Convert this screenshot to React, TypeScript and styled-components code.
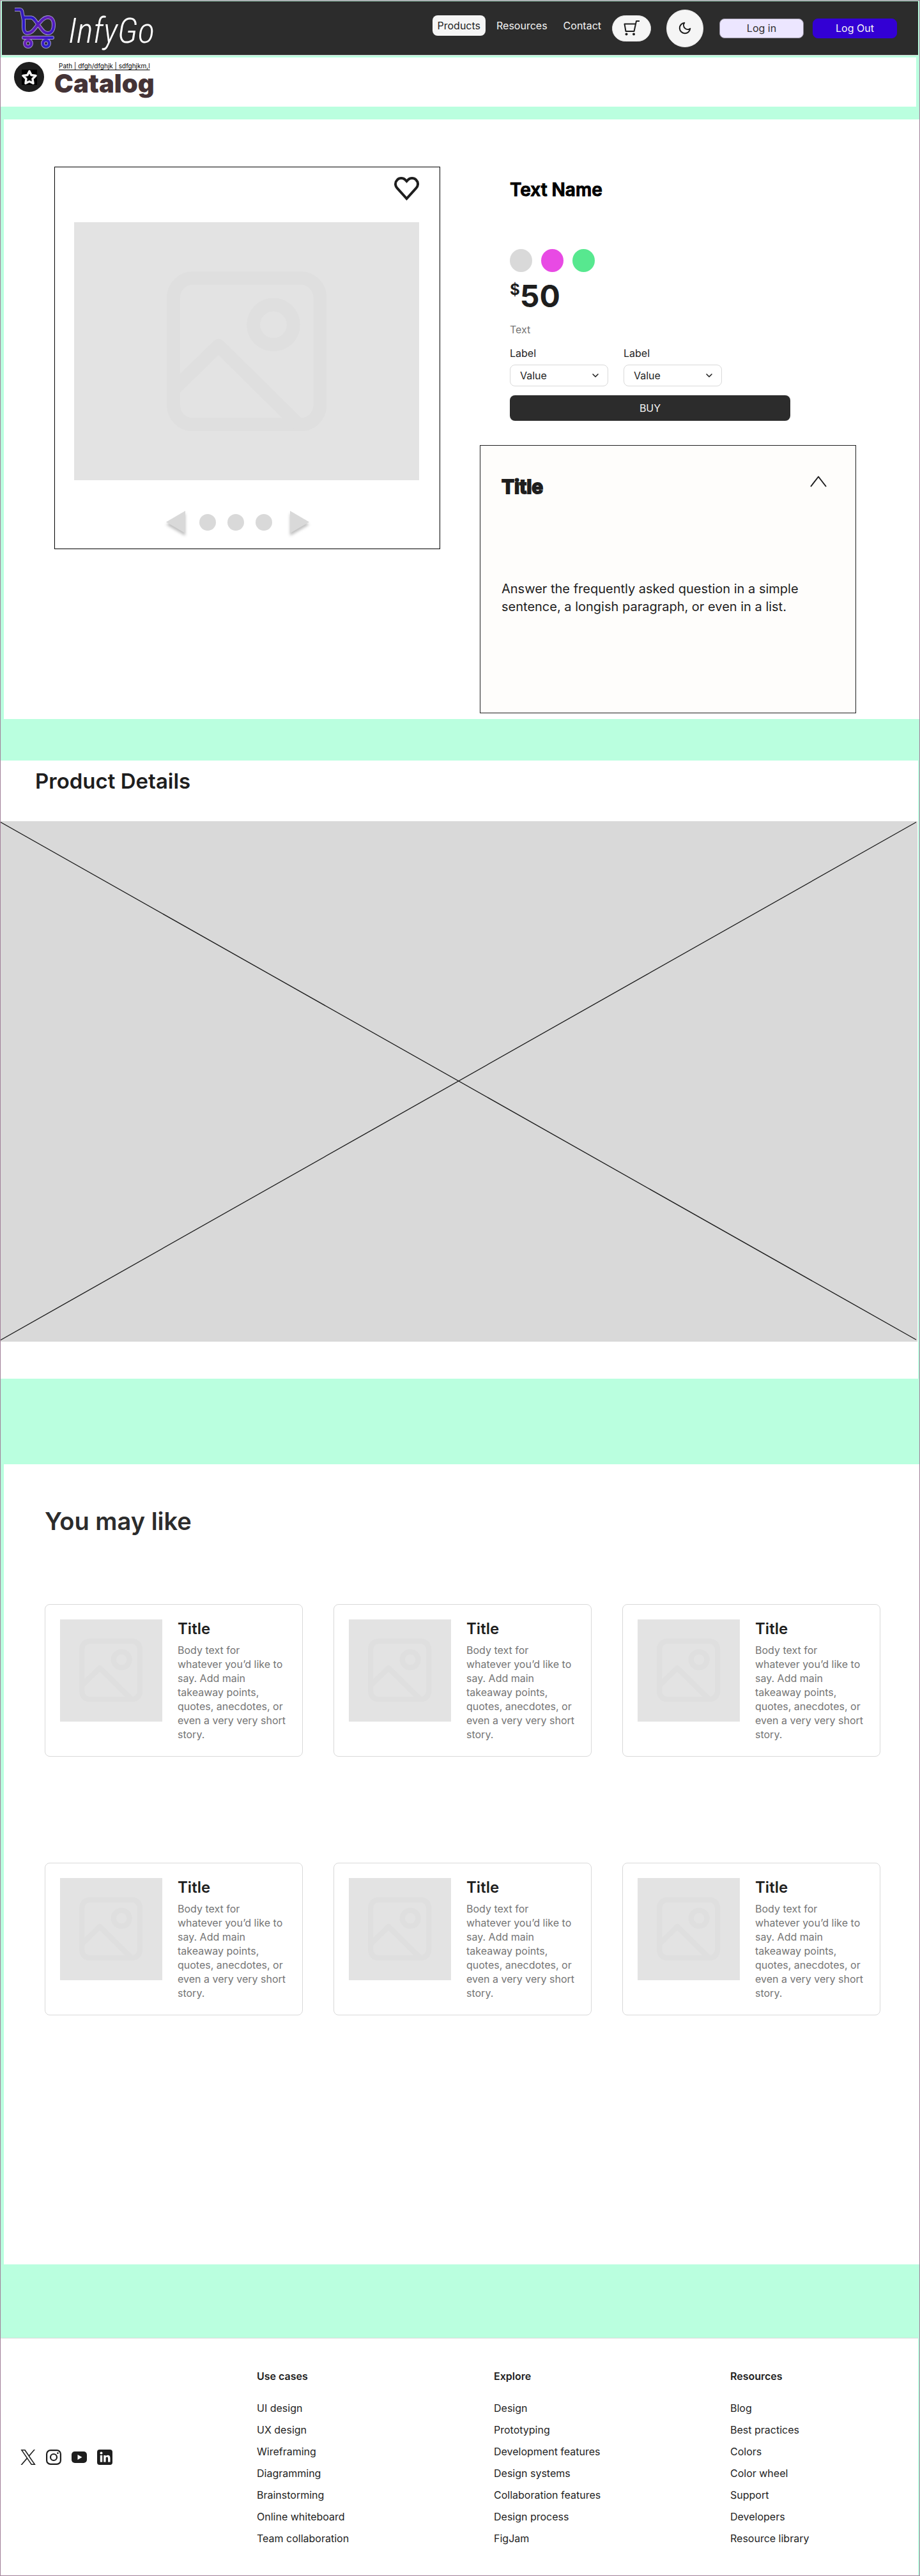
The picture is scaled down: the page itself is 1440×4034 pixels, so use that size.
import React from "react";
import styled, { createGlobalStyle } from "styled-components";

const GlobalStyle = createGlobalStyle`
  *, *::before, *::after { box-sizing: border-box; }
  body { margin: 0; background: #baffdf; font-family: Inter, "Liberation Sans", sans-serif; color: #1e1e1e; font-size: 16px; line-height: 22px; }
  h1, h2, h3, p, ul { margin: 0; padding: 0; }
  ul { list-style: none; }
  a { color: inherit; text-decoration: none; }
  button, select { font: inherit; color: inherit; cursor: pointer; }
  svg { display: block; }
`;

const Page = styled.div`
  border: 1px solid #a17f99;
  background: #baffdf;
`;

/* Header */
const Header = styled.header`
  display: flex;
  align-items: center;
  min-height: 85px;
  margin: 1px 2px 3px;
  padding: 0 33px 0 20px;
  background: #2c2c2c;
  border-bottom: 1px solid #d9d9d9;
`;

const Brand = styled.a`
  display: flex;
  align-items: center;
  gap: 20px;
  margin-right: auto;
`;

const Wordmark = styled.span`
  padding-top: 8px;
  color: #fff;
  font-family: "Roboto Condensed", Roboto, sans-serif;
  font-size: 55px;
  line-height: 64px;
  font-weight: 300;
  font-style: italic;
`;

const NavGroup = styled.div`
  display: flex;
  align-items: flex-start;
  gap: 9px;
  margin-right: 24px;
`;

const Nav = styled.nav`
  display: flex;
  gap: 9px;
`;

const NavLink = styled.a<{ $active?: boolean }>`
  padding: 8px;
  border-radius: 8px;
  line-height: 16px;
  color: ${(p) => (p.$active ? "#1e1e1e" : "#f5f5f5")};
  background: ${(p) => (p.$active ? "#f5f5f5" : "transparent")};
`;

const IconButton = styled.button<{ $width: number; $height: number }>`
  display: flex;
  align-items: center;
  justify-content: center;
  width: ${(p) => p.$width}px;
  height: ${(p) => p.$height}px;
  padding: 0;
  border: 1px solid #e3e3e3;
  border-radius: 32px;
  background: #f5f5f5;
`;

const AuthButtons = styled.div`
  display: flex;
  gap: 14px;
  margin-left: 25px;
`;

const AuthButton = styled.button<{ $primary?: boolean }>`
  width: 132px;
  height: 31px;
  padding: 0;
  line-height: 16px;
  border: 1px solid ${(p) => (p.$primary ? "#3300d4" : "#918c9c")};
  border-radius: 8px;
  color: ${(p) => (p.$primary ? "#f5f5f5" : "#303030")};
  background: ${(p) => (p.$primary ? "#3300d4" : "#ece6ff")};
`;

/* Catalog bar */
const CatalogBar = styled.div`
  display: flex;
  align-items: flex-start;
  gap: 16px;
  min-height: 77px;
  margin-right: 5px;
  padding: 7px 21px 0;
  background: #fff;
`;

const StarBadge = styled.div`
  display: flex;
  align-items: center;
  justify-content: center;
  width: 47px;
  height: 47px;
  border-radius: 50%;
  background: #1e1e1e;
`;

const StarTile = styled.div`
  background: #000;
`;

const Breadcrumb = styled.nav`
  margin-left: 7px;
  font-size: 10px;
  line-height: 12px;
  color: #000;
  text-decoration: underline;
  text-underline-offset: 2px;
`;

const CatalogTitle = styled.h1`
  margin-top: 2px;
  font-size: 40px;
  line-height: 40px;
  font-weight: 900;
  color: #443336;
`;

/* Product */
const ProductSection = styled.section`
  display: grid;
  grid-template-columns: 604fr 589fr;
  gap: 62px;
  align-items: start;
  margin: 20px 0 65px 5px;
  padding: 74px 99px 9px 79px;
  background: #fff;
`;

const Gallery = styled.div`
  padding: 15px 32px 24px 30px;
  border: 1px solid #000;
`;

const GalleryTop = styled.div`
  display: flex;
  justify-content: flex-end;
  margin-bottom: 34px;
`;

const PlainButton = styled.button`
  display: block;
  padding: 0;
  border: 0;
  background: none;
`;

const Placeholder = styled.div<{ $ratio: string }>`
  display: flex;
  align-items: center;
  justify-content: center;
  width: 100%;
  aspect-ratio: ${(p) => p.$ratio};
  background: #e3e3e3;

  svg { height: 62%; }
`;

const GalleryControls = styled.div`
  display: flex;
  align-items: center;
  justify-content: center;
  gap: 22px;
  padding-right: 28px;
  margin-top: 48px;
`;

const Dots = styled.div`
  display: flex;
  gap: 18px;
  padding-right: 6px;
`;

const Dot = styled.button`
  width: 26px;
  height: 26px;
  padding: 0;
  border: 0;
  border-radius: 50%;
  background: #d9d9d9;
`;

const ArrowButton = styled(PlainButton)`
  filter: drop-shadow(0 4px 2px rgba(0, 0, 0, 0.25));
`;

const Info = styled.div`
  padding: 19px 103px 0 47px;
`;

const ProductTitle = styled.h2`
  font-size: 28px;
  line-height: 34px;
  font-weight: 600;
  color: #000;
  -webkit-text-stroke: 1px #000;
`;

const Swatches = styled.div`
  display: flex;
  gap: 14px;
  margin-top: 76px;
`;

const Swatch = styled.button<{ $color: string }>`
  width: 35px;
  height: 36px;
  padding: 0;
  border: 0;
  border-radius: 50%;
  background: ${(p) => p.$color};
`;

const Price = styled.p`
  display: flex;
  align-items: flex-start;
  margin: 14px 0 17px;
  font-size: 48px;
  line-height: 48px;
  font-weight: 700;
`;

const Currency = styled.span`
  font-size: 24px;
  line-height: 28px;
`;

const Muted = styled.p`
  color: #757575;
`;

const Fields = styled.div`
  display: flex;
  gap: 24px;
  margin: 15px 0 14px;
`;

const Field = styled.label`
  display: flex;
  flex-direction: column;
  gap: 7px;
  width: 154px;
`;

const SelectBox = styled.span`
  position: relative;
  display: block;

  svg {
    position: absolute;
    right: 12px;
    top: 9px;
    pointer-events: none;
  }
`;

const Select = styled.select`
  appearance: none;
  display: block;
  width: 100%;
  height: 34px;
  padding: 0 32px 0 15px;
  border: 1px solid #d9d9d9;
  border-radius: 8px;
  background: #fff;
`;

const BuyButton = styled.button`
  display: block;
  width: 100%;
  height: 40px;
  border: 0;
  border-radius: 8px;
  color: #f5f5f5;
  background: #2c2c2c;
`;

const Accordion = styled.article`
  margin-top: 38px;
  padding: 47px 45px 152px 33px;
  border: 1px solid #1e1e1e;
  background: #fefdfb;
`;

const AccordionHead = styled.div`
  display: flex;
  align-items: flex-start;
  justify-content: space-between;
  margin-bottom: 129px;
`;

const AccordionTitle = styled.h2`
  font-size: 30px;
  line-height: 34px;
  font-weight: 700;
  -webkit-text-stroke: 2px #1e1e1e;
`;

const Answer = styled.p`
  font-size: 20px;
  line-height: 28px;
`;

/* Details */
const Details = styled.section`
  margin-right: 2px;
  padding-bottom: 58px;
  background: #fff;
`;

const DetailsTitle = styled.h2`
  padding: 12px 54px 43px;
  font-size: 33px;
  line-height: 40px;
  font-weight: 600;
`;

const DetailsMedia = styled.div`
  margin-right: 1px;
  background: #d9d9d9;

  svg {
    width: 100%;
    height: 815px;
  }
`;

/* Suggestions */
const Suggestions = styled.section`
  margin: 134px 0 115px 5px;
  padding: 65px 61px 390px 64px;
  background: #fff;
`;

const SuggestionsTitle = styled.h2`
  margin-bottom: 106px;
  font-size: 38px;
  line-height: 48px;
  font-weight: 600;
  color: #2c2c2c;
`;

const CardGrid = styled.div`
  display: grid;
  grid-template-columns: repeat(3, 1fr);
  column-gap: 48px;
  row-gap: 166px;
`;

const Card = styled.article`
  display: grid;
  grid-template-columns: 160px 1fr;
  gap: 24px;
  align-items: start;
  padding: 23px 25px 23px 23px;
  border: 1px solid #d9d9d9;
  border-radius: 8px;
`;

const CardTitle = styled.h3`
  margin-bottom: 8px;
  font-size: 24px;
  line-height: 29px;
  font-weight: 600;
`;

/* Footer */
const Footer = styled.footer`
  display: grid;
  grid-template-columns: 370fr 371fr 370fr 294fr;
  margin-right: 2px;
  padding: 48px 0 47px 31px;
  border-top: 1px solid #d9d9d9;
  background: #fff;
`;

const Socials = styled.div`
  display: flex;
  align-items: center;
  gap: 16px;
`;

const ColumnTitle = styled.h3`
  margin-bottom: 28px;
  font-size: 16px;
  line-height: 22px;
  font-weight: 600;
`;

const LinkList = styled.ul`
  display: flex;
  flex-direction: column;
  gap: 12px;
`;

const Logo = () => {
  const strokes = (
    <>
      <path d="M1.500 3H8Q11 3 11.500 7L14 20V31C14 36 16 40 20 40C28 40 31 32 36.500 26.500C42 20 46 15 52 15C58 15 61 20 61 27C61 34 58 40 52 40C45 40 42 33 36.500 26.500C32 20 30 16 26 15.500H13.500" />
      <path d="M14 47H59" />
      <circle cx="21" cy="56" r="5" />
      <circle cx="49" cy="56" r="5" />
    </>
  );
  return (
    <svg width="64" height="64" viewBox="0 0 64 64" fill="none" strokeLinecap="round" strokeLinejoin="round" aria-hidden="true">
      <defs>
        <linearGradient id="brand" gradientUnits="userSpaceOnUse" x1="0" y1="0" x2="64" y2="64">
          <stop offset="0" stopColor="#3a1cab" />
          <stop offset="0.350" stopColor="#2a18c8" />
          <stop offset="0.550" stopColor="#6a1fb4" />
          <stop offset="0.750" stopColor="#3d17c8" />
          <stop offset="1" stopColor="#1430c8" />
        </linearGradient>
      </defs>
      <g stroke="#9f97c9" strokeWidth="6">{strokes}</g>
      <g stroke="url(#brand)" strokeWidth="4">{strokes}</g>
    </svg>
  );
};

const CartIcon = () => (
  <svg width="26" height="26" viewBox="0 0 26 26" fill="none" stroke="#1e1e1e" strokeWidth="2" aria-hidden="true">
    <path d="M25 2H20L16.500 18H3.500L1.500 6.500H19" strokeLinejoin="round" />
    <circle cx="4.500" cy="22.500" r="2" fill="#1e1e1e" stroke="none" />
    <circle cx="16" cy="22.500" r="2" fill="#1e1e1e" stroke="none" />
  </svg>
);

const MoonIcon = () => (
  <svg width="22" height="22" viewBox="0 0 24 24" fill="none" stroke="#1e1e1e" strokeWidth="2.200" strokeLinejoin="round" aria-hidden="true">
    <path d="M21 12.790A9 9 0 1 1 11.210 3 7 7 0 0 0 21 12.790z" />
  </svg>
);

const StarIcon = () => (
  <svg width="24" height="24" viewBox="0 0 24 24" fill="none" stroke="#f3f3f3" strokeWidth="3.500" strokeLinejoin="round" aria-hidden="true">
    <path d="M12 2.500L15 8.500 22 9.500 17 14.500 18 21.500 12 18.500 6 21.500 7 14.500 2 9.500 9 8.500z" />
  </svg>
);

const HeartIcon = () => (
  <svg width="39" height="37" viewBox="0 0 39 37" fill="none" stroke="#1e1e1e" strokeWidth="4" aria-hidden="true">
    <path d="M34.300 4.700a9 9 0 0 0-12.700 0L19.500 6.800l-2.100-2.100a9 9 0 0 0-12.700 12.900L19.500 34 34.300 17.600a9 9 0 0 0 0-12.900z" />
  </svg>
);

const ImageIcon = () => (
  <svg viewBox="0 0 252 252" fill="none" stroke="#dfdfdf" strokeWidth="21" strokeLinejoin="round" aria-hidden="true">
    <rect x="10.500" y="10.500" width="231" height="231" rx="31" />
    <circle cx="168" cy="84" r="31.500" />
    <path d="M11 186L81.500 117L207 241" />
  </svg>
);

const Arrow = ({ flip }: { flip?: boolean }) => (
  <svg width="30" height="35" viewBox="0 0 30 35" fill="#d9d9d9" aria-hidden="true">
    <path d={flip ? "M0 0L30 17.500L0 35z" : "M30 0L0 17.500L30 35z"} />
  </svg>
);

const ChevronDown = () => (
  <svg width="16" height="16" viewBox="0 0 16 16" fill="none" stroke="#1e1e1e" strokeWidth="1.600" strokeLinecap="round" strokeLinejoin="round" aria-hidden="true">
    <path d="M4 6L8 10L12 6" />
  </svg>
);

const ChevronUp = () => (
  <svg width="26" height="18" viewBox="0 0 26 18" fill="none" stroke="#1e1e1e" strokeWidth="2" strokeLinejoin="round" aria-hidden="true">
    <path d="M1 17L13 1.500L25 17" />
  </svg>
);

const XLogo = () => (
  <svg width="24" height="24" viewBox="0 0 24 24" fill="#1e1e1e" aria-hidden="true">
    <path fillRule="evenodd" d="M14.300 10.200L23 0H21L13.400 8.800L7.400 0H0.400L9.500 13.300L0.400 24H2.500L10.500 14.700L16.800 24H23.800L14.300 10.200zM11.400 13.400L10.500 12.100L3.200 1.600H6.400L12.300 10.100L13.200 11.400L20.900 22.500H17.700L11.400 13.400z" />
  </svg>
);

const InstagramLogo = () => (
  <svg width="24" height="24" viewBox="0 0 24 24" fill="none" stroke="#1e1e1e" strokeWidth="2.200" aria-hidden="true">
    <rect x="1.100" y="1.100" width="21.800" height="21.800" rx="6" />
    <circle cx="12" cy="12" r="5" />
    <circle cx="18.400" cy="5.600" r="1.400" fill="#1e1e1e" stroke="none" />
  </svg>
);

const YoutubeLogo = () => (
  <svg width="24" height="24" viewBox="0 0 24 24" aria-hidden="true">
    <rect x="0" y="3" width="24" height="18" rx="5" fill="#1e1e1e" />
    <path d="M9.500 8L16.500 12L9.500 16z" fill="#fff" />
  </svg>
);

const LinkedinLogo = () => (
  <svg width="24" height="24" viewBox="0 0 24 24" aria-hidden="true">
    <rect width="24" height="24" rx="4" fill="#1e1e1e" />
    <g fill="#fff">
      <circle cx="6.500" cy="5.600" r="2" />
      <rect x="4.800" y="9" width="3.400" height="10.500" />
      <path d="M10.300 9h3.200v1.500c.6-1 1.700-1.700 3.200-1.700 2.800 0 3.800 1.700 3.800 4.700v6h-3.400v-5.400c0-1.500-.4-2.500-1.700-2.500s-1.800 1-1.800 2.500v5.400h-3.300z" />
    </g>
  </svg>
);

const swatches = [
  { name: "Grey", color: "#d9d9d9" },
  { name: "Pink", color: "#e84ae4" },
  { name: "Green", color: "#57e88f" },
];

const footerColumns = [
  {
    title: "Use cases",
    links: ["UI design", "UX design", "Wireframing", "Diagramming", "Brainstorming", "Online whiteboard", "Team collaboration"],
  },
  {
    title: "Explore",
    links: ["Design", "Prototyping", "Development features", "Design systems", "Collaboration features", "Design process", "FigJam"],
  },
  {
    title: "Resources",
    links: ["Blog", "Best practices", "Colors", "Color wheel", "Support", "Developers", "Resource library"],
  },
];

const ValueField = () => (
  <Field>
    Label
    <SelectBox>
      <Select defaultValue="Value">
        <option>Value</option>
      </Select>
      <ChevronDown />
    </SelectBox>
  </Field>
);

export default function App() {
  return (
    <Page>
      <GlobalStyle />
      <Header>
        <Brand href="#">
          <Logo />
          <Wordmark>InfyGo</Wordmark>
        </Brand>
        <NavGroup>
          <Nav>
            <NavLink href="#" $active>Products</NavLink>
            <NavLink href="#">Resources</NavLink>
            <NavLink href="#">Contact</NavLink>
          </Nav>
          <IconButton $width={61} $height={41} aria-label="Cart"><CartIcon /></IconButton>
        </NavGroup>
        <IconButton $width={58} $height={59} aria-label="Dark mode"><MoonIcon /></IconButton>
        <AuthButtons>
          <AuthButton>Log in</AuthButton>
          <AuthButton $primary>Log Out</AuthButton>
        </AuthButtons>
      </Header>

      <CatalogBar>
        <StarBadge><StarTile><StarIcon /></StarTile></StarBadge>
        <div>
          <Breadcrumb>Path | dfgh/dfghjk | sdfghjkm,l</Breadcrumb>
          <CatalogTitle>Catalog</CatalogTitle>
        </div>
      </CatalogBar>

      <main>
        <ProductSection>
          <Gallery>
            <GalleryTop>
              <PlainButton aria-label="Add to favourites"><HeartIcon /></PlainButton>
            </GalleryTop>
            <Placeholder $ratio="540 / 404"><ImageIcon /></Placeholder>
            <GalleryControls>
              <ArrowButton aria-label="Previous"><Arrow /></ArrowButton>
              <Dots>
                <Dot aria-label="Image 1" />
                <Dot aria-label="Image 2" />
                <Dot aria-label="Image 3" />
              </Dots>
              <ArrowButton aria-label="Next"><Arrow flip /></ArrowButton>
            </GalleryControls>
          </Gallery>

          <div>
            <Info>
              <ProductTitle>Text Name</ProductTitle>
              <Swatches>
                {swatches.map((s) => (
                  <Swatch key={s.name} $color={s.color} aria-label={s.name} />
                ))}
              </Swatches>
              <Price><Currency>$</Currency>50</Price>
              <Muted>Text</Muted>
              <Fields>
                <ValueField />
                <ValueField />
              </Fields>
              <BuyButton>BUY</BuyButton>
            </Info>
            <Accordion>
              <AccordionHead>
                <AccordionTitle>Title</AccordionTitle>
                <PlainButton aria-label="Collapse"><ChevronUp /></PlainButton>
              </AccordionHead>
              <Answer>
                Answer the frequently asked question in a simple sentence, a longish paragraph, or even in a list.
              </Answer>
            </Accordion>
          </div>
        </ProductSection>

        <Details>
          <DetailsTitle>Product Details</DetailsTitle>
          <DetailsMedia>
            <svg viewBox="0 0 1435 815" preserveAspectRatio="none" stroke="#1e1e1e" strokeWidth="1.400" aria-hidden="true">
              <path d="M0 1.500L1433 812M0 812.500L1433 1.500" />
            </svg>
          </DetailsMedia>
        </Details>

        <Suggestions>
          <SuggestionsTitle>You may like</SuggestionsTitle>
          <CardGrid>
            {[1, 2, 3, 4, 5, 6].map((n) => (
              <Card key={n}>
                <Placeholder $ratio="1 / 1"><ImageIcon /></Placeholder>
                <div>
                  <CardTitle>Title</CardTitle>
                  <Muted>
                    Body text for whatever you’d like to say. Add main takeaway points, quotes, anecdotes, or even a very very short story.
                  </Muted>
                </div>
              </Card>
            ))}
          </CardGrid>
        </Suggestions>
      </main>

      <Footer>
        <Socials>
          <a href="#" aria-label="X"><XLogo /></a>
          <a href="#" aria-label="Instagram"><InstagramLogo /></a>
          <a href="#" aria-label="YouTube"><YoutubeLogo /></a>
          <a href="#" aria-label="LinkedIn"><LinkedinLogo /></a>
        </Socials>
        {footerColumns.map((column) => (
          <nav key={column.title} aria-label={column.title}>
            <ColumnTitle>{column.title}</ColumnTitle>
            <LinkList>
              {column.links.map((link) => (
                <li key={link}><a href="#">{link}</a></li>
              ))}
            </LinkList>
          </nav>
        ))}
      </Footer>
    </Page>
  );
}
